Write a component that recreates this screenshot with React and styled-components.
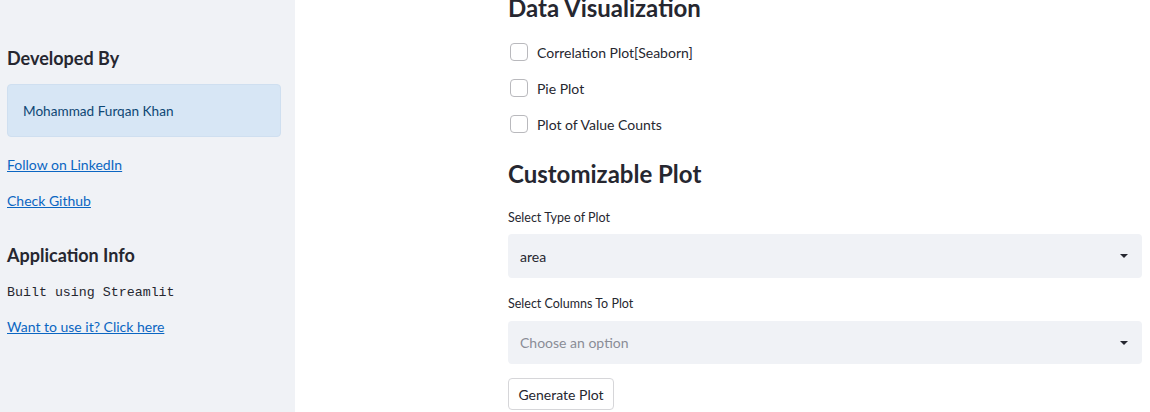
import React from "react";
import styled, { createGlobalStyle } from "styled-components";

const Global = createGlobalStyle`
  html, body { margin: 0; padding: 0; background: #ffffff; }
  body { font-family: Lato, "Open Sans", sans-serif; color: #262730; }
  * { box-sizing: border-box; }
`;

const Page = styled.div`
  display: flex;
  width: 1150px;
  height: 412px;
  overflow: hidden;
`;

const Sidebar = styled.aside`
  width: 295px;
  flex: none;
  background: #f0f2f6;
  padding: 46px 14px 0 7px;
  display: flex;
  flex-direction: column;
`;

const SideHeading = styled.h3`
  margin: 0;
  font-size: 18px;
  line-height: 24px;
  font-weight: 700;
  color: #262730;
  margin-bottom: ${(p) => p.$mb || 14}px;
`;

const InfoBox = styled.div`
  background: #d7e6f5;
  border: 1px solid #cfdff0;
  border-radius: 4px;
  height: 53px;
  padding: 0 15px;
  display: flex;
  align-items: center;
  font-size: 13.6px;
  color: #0e4774;
  margin-bottom: 17px;
`;

const Link = styled.a`
  font-size: 14px;
  line-height: 22px;
  color: #0b66c2;
  text-decoration: underline;
  margin-bottom: ${(p) => p.$mb || 15}px;
  align-self: flex-start;
`;

const Mono = styled.div`
  font-family: "Liberation Mono", monospace;
  font-size: 13.3px;
  line-height: 22px;
  color: #262730;
  margin-bottom: 12px;
`;

const Main = styled.main`
  flex: 1;
  padding-left: 213px;
  padding-right: 8px;
`;

const Content = styled.div`
  width: 634px;
  margin-top: -9px;
  display: flex;
  flex-direction: column;
`;

const Heading = styled.h2`
  margin: 0;
  font-size: 24px;
  line-height: 34px;
  font-weight: 700;
  color: #262730;
  margin-top: ${(p) => p.$mt || 0}px;
  margin-bottom: ${(p) => p.$mb || 0}px;
`;

const CheckRow = styled.label`
  display: flex;
  align-items: center;
  height: 36px;
  padding-left: 2px;
  font-size: 14px;
  color: #262730;
`;

const Box = styled.span`
  width: 18px;
  height: 18px;
  border: 1px solid #b9b9bd;
  border-radius: 4px;
  background: #fff;
  margin-right: 9px;
`;

const FieldLabel = styled.div`
  font-size: 12.5px;
  line-height: 18px;
  color: #262730;
  margin-bottom: ${(p) => p.$mb || 8}px;
`;

const Select = styled.div`
  height: ${(p) => p.$h || 44}px;
  background: #f0f2f6;
  border-radius: 4px;
  display: flex;
  align-items: center;
  justify-content: space-between;
  padding: 0 14px 0 12px;
  font-size: 14px;
  color: ${(p) => (p.$placeholder ? "#8a8d96" : "#262730")};
  margin-bottom: ${(p) => p.$mb || 0}px;
`;

const Caret = styled.span`
  width: 0;
  height: 0;
  border-left: 4px solid transparent;
  border-right: 4px solid transparent;
  border-top: 4px solid #262730;
`;

const Button = styled.button`
  align-self: flex-start;
  height: 32px;
  width: 106px;
  background: #fff;
  border: 1px solid #d6d6d9;
  border-radius: 4px;
  font-family: inherit;
  font-size: 14px;
  color: #262730;
  padding: 0;
`;

export default function App() {
  return (
    <Page>
      <Global />
      <Sidebar>
        <SideHeading $mb={14}>Developed By</SideHeading>
        <InfoBox>Mohammad Furqan Khan</InfoBox>
        <Link href="#" $mb={14}>Follow on LinkedIn</Link>
        <Link href="#" $mb={31}>Check Github</Link>
        <SideHeading $mb={15}>Application Info</SideHeading>
        <Mono>Built using Streamlit</Mono>
        <Link href="#">Want to use it? Click here</Link>
      </Sidebar>
      <Main>
        <Content>
          <Heading $mb={9}>Data Visualization</Heading>
          <CheckRow><Box />Correlation Plot[Seaborn]</CheckRow>
          <CheckRow><Box />Pie Plot</CheckRow>
          <CheckRow><Box />Plot of Value Counts</CheckRow>
          <Heading $mt={15} $mb={18}>Customizable Plot</Heading>
          <FieldLabel $mb={7}>Select Type of Plot</FieldLabel>
          <Select $mb={17}>area<Caret /></Select>
          <FieldLabel $mb={8}>Select Columns To Plot</FieldLabel>
          <Select $placeholder $h={43} $mb={14}>Choose an option<Caret /></Select>
          <Button>Generate Plot</Button>
        </Content>
      </Main>
    </Page>
  );
}
